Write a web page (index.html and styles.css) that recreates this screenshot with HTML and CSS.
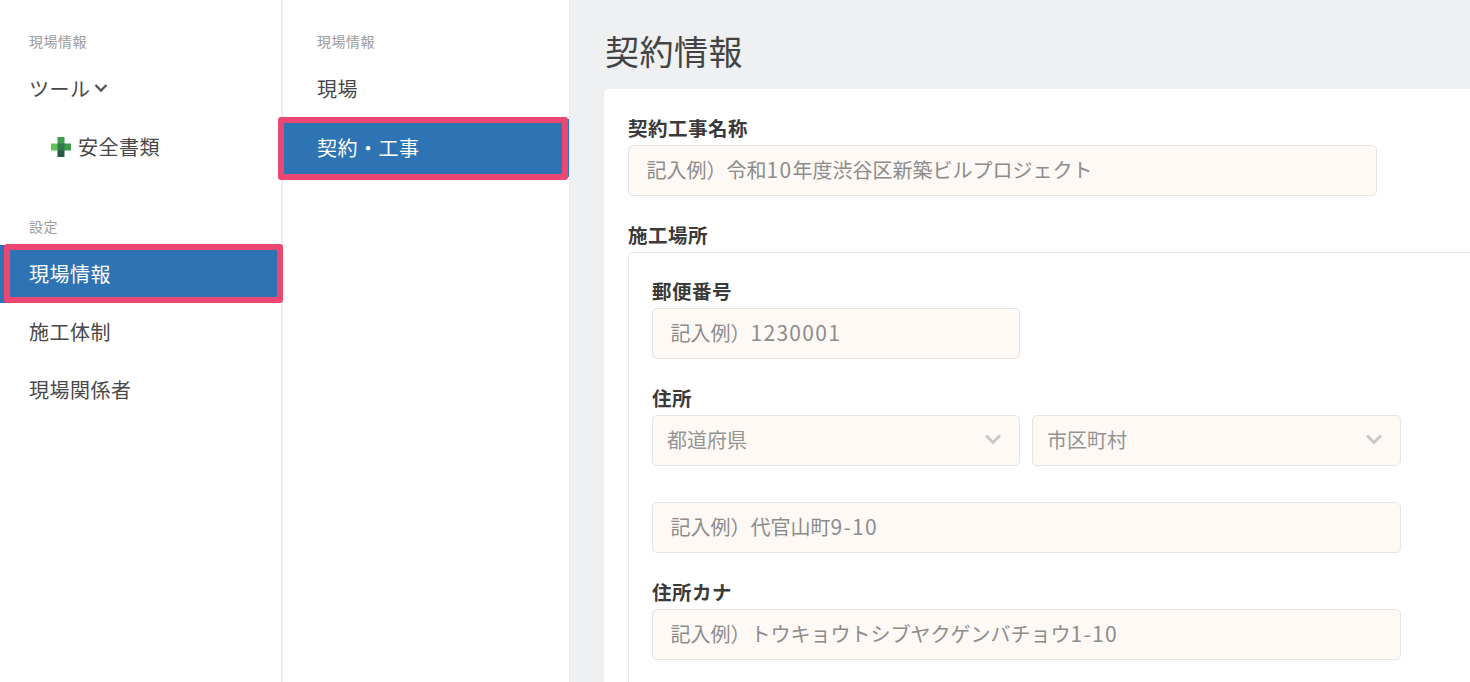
FILE: index.html
```html
<!DOCTYPE html>
<html lang="ja">
<head>
<meta charset="utf-8">
<title>契約情報</title>
<link rel="stylesheet" href="styles.css">
</head>
<body>
<div class="app">
  <aside class="side side-one">
    <p class="side-label">現場情報</p>
    <a class="nav-item">ツール<svg class="nav-chevron" viewBox="0 0 14 10"><path d="M1.5 2 7 7.5 12.5 2" /></svg></a>
    <a class="nav-item nav-sub">
      <svg class="cross" viewBox="0 0 20 20">
        <rect x="6.5" y="0" width="7" height="7" fill="#3f9c4c"/>
        <rect x="0" y="6.5" width="7" height="7" fill="#62c457"/>
        <rect x="13" y="6.5" width="7" height="7" fill="#3c9a4e"/>
        <rect x="6.5" y="13" width="7" height="7" fill="#26584a"/>
        <rect x="6.5" y="6.5" width="7" height="7" fill="#2f7a4c"/>
      </svg>安全書類</a>
    <p class="side-label side-label-second">設定</p>
    <a class="nav-item is-active mark-one">現場情報</a>
    <a class="nav-item">施工体制</a>
    <a class="nav-item">現場関係者</a>
  </aside>
  <aside class="side side-two">
    <p class="side-label">現場情報</p>
    <a class="nav-item">現場</a>
    <a class="nav-item is-active mark-two">契約・工事</a>
  </aside>
  <main class="main">
    <h1 class="title">契約情報</h1>
    <section class="card">
      <div class="field field-name">
        <label class="label">契約工事名称</label>
        <div class="input"><span>記入例）令和<span class="num">10</span>年度渋谷区新築ビルプロジェクト</span></div>
      </div>
      <div class="label label-place">施工場所</div>
      <div class="group">
        <div class="field field-zip">
          <label class="label">郵便番号</label>
          <div class="input"><span>記入例）<span class="num">1230001</span></span></div>
        </div>
        <div class="field field-address">
          <label class="label">住所</label>
          <div class="select-row">
            <div class="select">都道府県<svg class="select-chevron" viewBox="0 0 18 12"><path d="M2 2.5 9 9.5 16 2.5" /></svg></div>
            <div class="select">市区町村<svg class="select-chevron" viewBox="0 0 18 12"><path d="M2 2.5 9 9.5 16 2.5" /></svg></div>
          </div>
          <div class="input input-street"><span>記入例）代官山町<span class="num">9-10</span></span></div>
        </div>
        <div class="field field-kana">
          <label class="label">住所カナ</label>
          <div class="input"><span>記入例）トウキョウトシブヤクゲンバチョウ<span class="num">1-10</span></span></div>
        </div>
      </div>
    </section>
  </main>
</div>
</body>
</html>
```
FILE: styles.css
```css
* { box-sizing: border-box; }
html, body { margin: 0; height: 100%; overflow: hidden; }
body {
  font-family: "Noto Sans CJK JP", "Noto Sans", sans-serif;
  color: #444;
  background: #fff;
}
.app { display: flex; height: 682px; width: 1470px; overflow: hidden; }
.side {
  flex: none;
  background: #fff;
  padding-top: 30px;
}
.side-one { width: 283px; border-right: 2px solid #eeeff1; }
.side-two { width: 287px; border-right: 1px solid #e6e7e9; }
.side-label {
  margin: 0 0 6px;
  padding-left: 29px;
  height: 24px;
  font-size: 14px;
  line-height: 22px;
  letter-spacing: 0.5px;
  color: #9b9b9b;
}
.side-label-second { margin-top: 39px; }
.side-two .side-label { padding-left: 34px; }
.nav-item {
  display: flex;
  align-items: center;
  height: 58px;
  padding-left: 29px;
  padding-bottom: 2px;
  font-size: 20px;
  letter-spacing: 0.5px;
  color: #484848;
  position: relative;
}
.side-two .nav-item { padding-left: 34px; }
.nav-sub { padding-left: 51px; padding-bottom: 0; line-height: 1; }
.nav-chevron {
  width: 14px;
  height: 10px;
  margin-left: 3px;
  fill: none;
  stroke: #555;
  stroke-width: 2.4;
}
.cross { width: 20px; height: 20px; margin-right: 7px; }
.is-active { background: #2e73b3; color: #fff; }
.is-active::after {
  content: "";
  position: absolute;
  z-index: 1;
  border: 6px solid #ec4673;
  border-radius: 3px;
}
.mark-one::after { left: 4px; right: -2px; top: -1px; bottom: 0; }
.mark-two { margin-top: 1px; }
.mark-two::after { left: -5px; right: 1px; top: -2px; bottom: -3px; }
.main {
  flex: 1;
  min-width: 0;
  background: #eff0f2;
  padding: 25px 0 0 34px;
}
.title {
  margin: 0 0 13px 1px;
  height: 51px;
  font-size: 34px;
  font-weight: 400;
  line-height: 51px;
  letter-spacing: 0.5px;
  color: #444;
}
.card {
  width: 900px;
  height: 640px;
  background: #fff;
  border-radius: 5px 0 0 0;
  padding: 24px 0 0 24px;
}
.label {
  display: block;
  font-size: 19.5px;
  font-weight: 700;
  line-height: 29px;
  height: 32px;
  letter-spacing: 0.5px;
  color: #3a3a3a;
}
.input, .select {
  display: flex;
  align-items: center;
  height: 51px;
  background: #fef9f4;
  border: 1px solid #e6e5e3;
  border-radius: 5px;
  font-size: 20px;
  color: #8c8c8c;
  padding-left: 17.5px;
  padding-bottom: 4px;
}
.num { font-size: 21px; letter-spacing: 1.3px; }
.field-name .input { width: 749px; }
.label-place { margin-top: 24px; }
.group {
  border: 1px solid #e8e8e8;
  border-right: 0;
  border-radius: 5px 0 0 0;
  padding: 23px 0 0 23px;
  height: 500px;
}
.field-zip .input { width: 368px; }
.field-address { margin-top: 24px; }
.select-row { display: grid; grid-template-columns: 368px 369px; gap: 12px; }
.select {
  justify-content: space-between;
  padding: 0 17px 3px 14px;
  color: #949494;
}
.select-chevron {
  width: 18px;
  height: 12px;
  fill: none;
  stroke: #c8c8c8;
  stroke-width: 3;
}
.input-street { width: 749px; margin-top: 36px; }
.field-kana { margin-top: 24px; }
.field-kana .input { width: 749px; }
```
